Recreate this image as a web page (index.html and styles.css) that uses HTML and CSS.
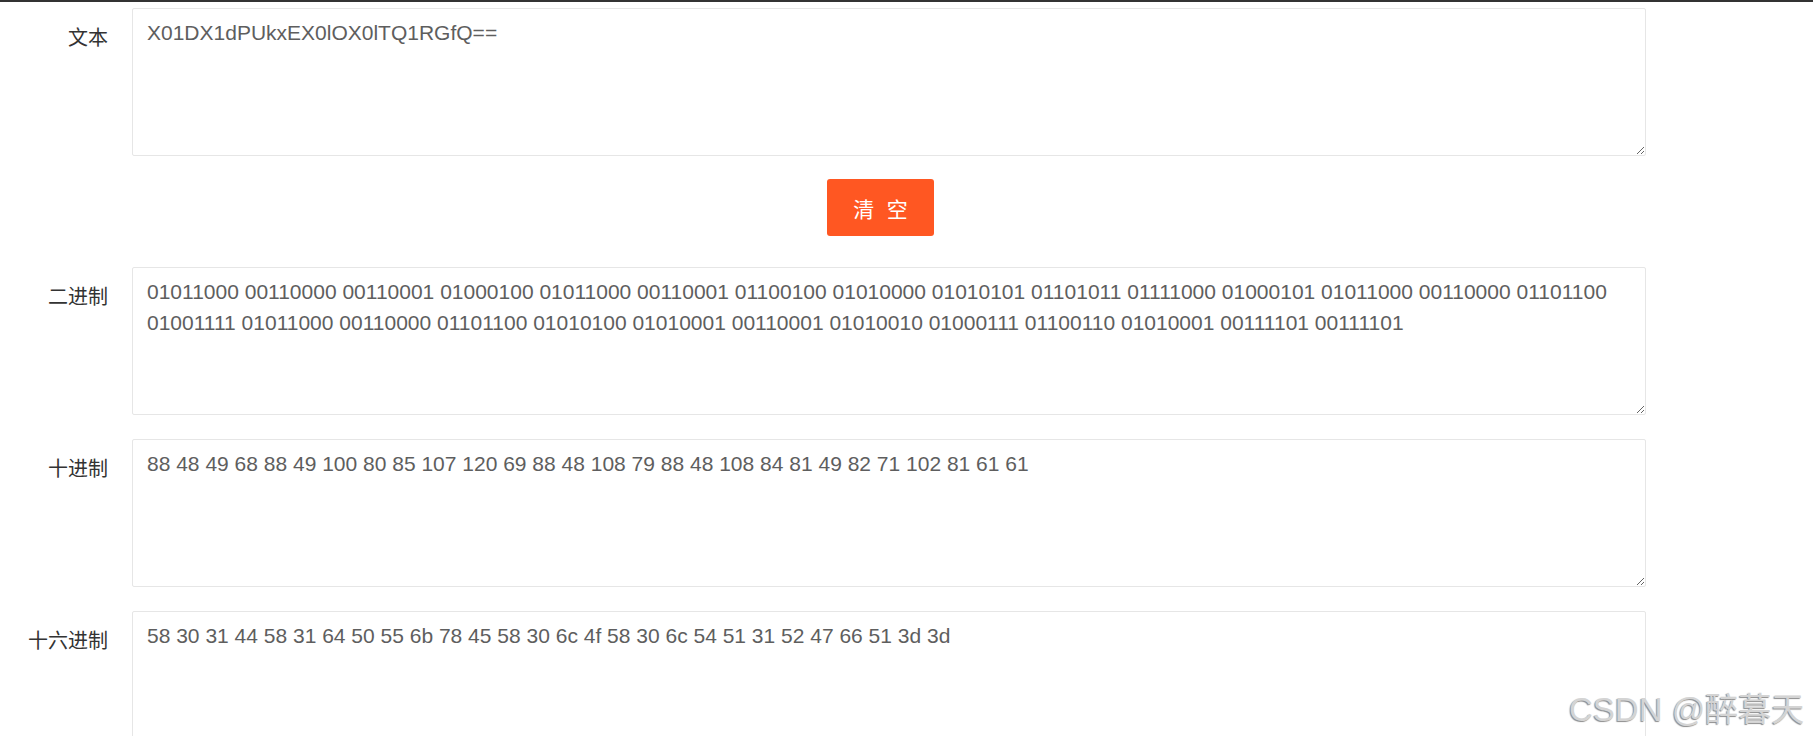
FILE: index.html
```html
<!DOCTYPE html>
<html lang="zh-CN">
<head>
<meta charset="utf-8">
<title>进制转换</title>
<link rel="stylesheet" href="styles.css">
</head>
<body>
<div class="topbar"></div>
<form class="form">
  <div class="row">
    <label class="label">文本</label>
    <textarea class="field">X01DX1dPUkxEX0lOX0lTQ1RGfQ==</textarea>
  </div>
  <div class="actions">
    <button type="button" class="btn">清 空</button>
  </div>
  <div class="row">
    <label class="label">二进制</label>
    <textarea class="field">01011000 00110000 00110001 01000100 01011000 00110001 01100100 01010000 01010101 01101011 01111000 01000101 01011000 00110000 01101100 01001111 01011000 00110000 01101100 01010100 01010001 00110001 01010010 01000111 01100110 01010001 00111101 00111101</textarea>
  </div>
  <div class="row">
    <label class="label">十进制</label>
    <textarea class="field">88 48 49 68 88 49 100 80 85 107 120 69 88 48 108 79 88 48 108 84 81 49 82 71 102 81 61 61</textarea>
  </div>
  <div class="row">
    <label class="label">十六进制</label>
    <textarea class="field">58 30 31 44 58 31 64 50 55 6b 78 45 58 30 6c 4f 58 30 6c 54 51 31 52 47 66 51 3d 3d</textarea>
  </div>
</form>
<div class="watermark">CSDN @醉暮天</div>
</body>
</html>
```

FILE: styles.css
```css
html, body {
  margin: 0;
  padding: 0;
  background: #ffffff;
  overflow: hidden;
  height: 736px;
}

body {
  font-family: "Liberation Sans", "Noto Sans CJK SC", sans-serif;
  position: relative;
}

.topbar {
  height: 2px;
  background: #333333;
}

.form {
  display: flex;
  flex-direction: column;
  padding-top: 6px;
}

.row {
  display: flex;
  align-items: flex-start;
  gap: 24px;
  margin-bottom: 24px;
}

.label {
  width: 108px;
  flex: none;
  text-align: right;
  font-family: "Noto Sans CJK SC", sans-serif;
  font-size: 20px;
  line-height: 30px;
  color: #333333;
  padding-top: 14px;
  box-sizing: border-box;
}

.field {
  width: 1514px;
  height: 148px;
  box-sizing: border-box;
  border: 1px solid #e6e6e6;
  border-radius: 2px;
  padding: 8px 14px;
  margin: 0;
  font-family: "Liberation Sans", "Noto Sans CJK SC", sans-serif;
  font-size: 21px;
  line-height: 31px;
  color: #5e5e5e;
  background: #ffffff;
  outline: none;
}

.actions {
  margin-left: 132px;
  width: 1497px;
  display: flex;
  justify-content: center;
  margin-top: -1px;
  margin-bottom: 31px;
}

.btn {
  width: 107px;
  height: 57px;
  border: none;
  border-radius: 3px;
  background: #ff5722;
  color: #ffffff;
  font-family: "Noto Sans CJK SC", sans-serif;
  font-size: 21px;
  letter-spacing: 4px;
  padding: 0 0 0 4px;
  cursor: pointer;
}

.watermark {
  position: absolute;
  left: 1569px;
  top: 683px;
  font-family: "Liberation Sans", "Noto Sans CJK SC", sans-serif;
  font-size: 33px;
  color: #d4d4d4;
  text-shadow: -1px 1px 1px #8c8c8c;
  white-space: nowrap;
  pointer-events: none;
}
```
